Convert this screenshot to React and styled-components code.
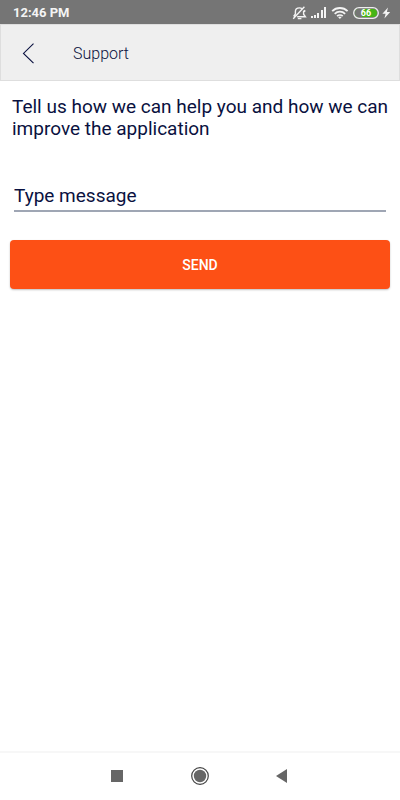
import React, { useState } from 'react';
import styled, { createGlobalStyle } from 'styled-components';

const colors = {
  navy: '#0a1140',
  orange: '#fd5015',
  status: '#757575',
  toolbar: '#efefef',
  line: '#9fa6b4',
  nav: '#666666',
};

const GlobalStyle = createGlobalStyle`
  * {
    box-sizing: border-box;
  }

  body {
    margin: 0;
    background: #ffffff;
    color: ${colors.navy};
    font-family: Roboto, sans-serif;
  }
`;

const Screen = styled.div`
  display: flex;
  flex-direction: column;
  min-height: 100vh;
`;

const StatusBar = styled.div`
  display: flex;
  align-items: center;
  justify-content: space-between;
  height: 24px;
  padding: 1px 9px 0 13px;
  background: ${colors.status};
  color: #f4f4f4;
`;

const Time = styled.time`
  font-size: 13px;
  font-weight: 700;
  line-height: 22px;
`;

const StatusIcons = styled.div`
  display: flex;
  align-items: center;
  gap: 3px;

  svg {
    display: block;
  }
`;

const Toolbar = styled.header`
  display: flex;
  align-items: center;
  gap: 36px;
  height: 57px;
  padding: 2px 20px 0;
  background: ${colors.toolbar};
  border: 1px solid #dedede;
`;

const BackButton = styled.button`
  display: flex;
  padding: 0;
  border: 0;
  background: none;
  color: ${colors.navy};
  cursor: pointer;
`;

const Title = styled.h1`
  margin: 0;
  font-size: 16px;
  font-weight: 300;
  line-height: 24px;
`;

const Form = styled.form`
  display: flex;
  flex: 1;
  flex-direction: column;
  padding: 15px 10px;
`;

const Prompt = styled.label`
  padding-left: 2px;
  font-size: 19px;
  line-height: 22px;
`;

const MessageInput = styled.input`
  height: 32px;
  margin: 40px 4px 28px;
  padding: 0;
  border: 0;
  border-bottom: 2px solid ${colors.line};
  border-radius: 0;
  outline: 0;
  background: none;
  color: inherit;
  font: 19px Roboto, sans-serif;

  &::placeholder {
    color: inherit;
    opacity: 1;
  }
`;

const SendButton = styled.button`
  height: 49px;
  border: 0;
  border-radius: 4px;
  background: ${colors.orange};
  box-shadow: 0 1px 2px rgba(0, 0, 0, 0.25);
  color: #ffffff;
  font: 500 14px Roboto, sans-serif;
  cursor: pointer;
`;

const NavBar = styled.nav`
  display: flex;
  align-items: center;
  justify-content: center;
  gap: 62px;
  height: 49px;
  padding-bottom: 2px;
  border-top: 2px solid #f7f7f7;
`;

const NavButton = styled.button`
  display: flex;
  padding: 0;
  border: 0;
  background: none;
  color: ${colors.nav};
  cursor: pointer;
`;

const MutedBell = () => (
  <svg width="16" height="14" viewBox="0 0 16 14" fill="none" stroke="currentColor" strokeWidth="1.4">
    <path d="M3.4 8.2V5.6C3.4 3.4 5 1.9 7.5 1.9c1 0 1.8.2 2.4.6M11.6 4.8v3.4l1.8 2.6H5.2M3.4 8l-1.8 2.4M5.8 12.6h3.6M1.2 12.8 12.4.8M11.8 4.4l1.6 1" />
  </svg>
);

const Signal = () => (
  <svg width="17" height="12" viewBox="0 0 17 12" fill="currentColor">
    <path d="M0 9h2v2H0zM3 8h2v3H3zM6 6h2v5H6zM10 3h2v8h-2zM13 0h2v11h-2z" />
  </svg>
);

const Wifi = () => (
  <svg width="19" height="12" viewBox="0 0 19 12" fill="none" stroke="currentColor" strokeWidth="1.8">
    <path d="M1.2 4.2a10.9 10.9 0 0 1 15.4 0M3.7 6.8a7.4 7.4 0 0 1 10.4 0M6.1 9.2a4 4 0 0 1 5.6 0" />
    <path d="M7.2 10.3 8.9 12l1.7-1.7a2.4 2.4 0 0 0-3.4 0z" fill="currentColor" stroke="none" />
  </svg>
);

const Battery = ({ level }) => (
  <svg width="26" height="12" viewBox="0 0 26 12" role="img" aria-label={`Battery ${level}%`}>
    <rect x="2" y="2" width="22" height="8" rx="4" fill="#45b516" />
    <path d="M6 2h3v8H6a4 4 0 0 1 0-8z" fill={colors.status} />
    <rect x="0.7" y="0.7" width="24.6" height="10.6" rx="5.3" fill="none" stroke="#eeeeee" strokeWidth="1.3" />
    <text x="13" y="9" fill="#ffffff" fontSize="9" fontWeight="700" textAnchor="middle">
      {level}
    </text>
  </svg>
);

const Bolt = () => (
  <svg width="9" height="12" viewBox="0 0 9 12" fill="currentColor">
    <path d="M6 .4.4 6.8h3.2L2.4 11.6 8.2 5H4.9z" />
  </svg>
);

const App = () => {
  const [message, setMessage] = useState('');

  return (
    <>
      <GlobalStyle />
      <Screen>
        <StatusBar>
          <Time>12:46 PM</Time>
          <StatusIcons>
            <MutedBell />
            <Signal />
            <Wifi />
            <Battery level={66} />
            <Bolt />
          </StatusIcons>
        </StatusBar>
        <Toolbar>
          <BackButton type="button" aria-label="Back">
            <svg width="16" height="22" viewBox="0 0 16 22" fill="none" stroke="currentColor" strokeWidth="1.1">
              <path d="M12.5.6 2.5 10.4l10 9.8" />
            </svg>
          </BackButton>
          <Title>Support</Title>
        </Toolbar>
        <Form onSubmit={e => e.preventDefault()}>
          <Prompt htmlFor="message">
            Tell us how we can help you and how we can improve the application
          </Prompt>
          <MessageInput
            id="message"
            type="text"
            placeholder="Type message"
            value={message}
            onChange={e => setMessage(e.target.value)}
          />
          <SendButton type="submit">SEND</SendButton>
        </Form>
        <NavBar>
          <NavButton type="button" aria-label="Recent apps">
            <svg width="20" height="20" viewBox="0 0 20 20">
              <path d="M3 4h12v12H3z" fill="currentColor" />
            </svg>
          </NavButton>
          <NavButton type="button" aria-label="Home">
            <svg width="20" height="20" viewBox="0 0 20 20">
              <circle cx="10" cy="10" r="8.3" fill="none" stroke="#444444" strokeWidth="1.2" />
              <circle cx="10" cy="10" r="6.2" fill="currentColor" />
            </svg>
          </NavButton>
          <NavButton type="button" aria-label="Back to previous screen">
            <svg width="20" height="20" viewBox="0 0 20 20">
              <path d="M4 10 15 3v14z" fill="currentColor" />
            </svg>
          </NavButton>
        </NavBar>
      </Screen>
    </>
  );
};

export default App;
